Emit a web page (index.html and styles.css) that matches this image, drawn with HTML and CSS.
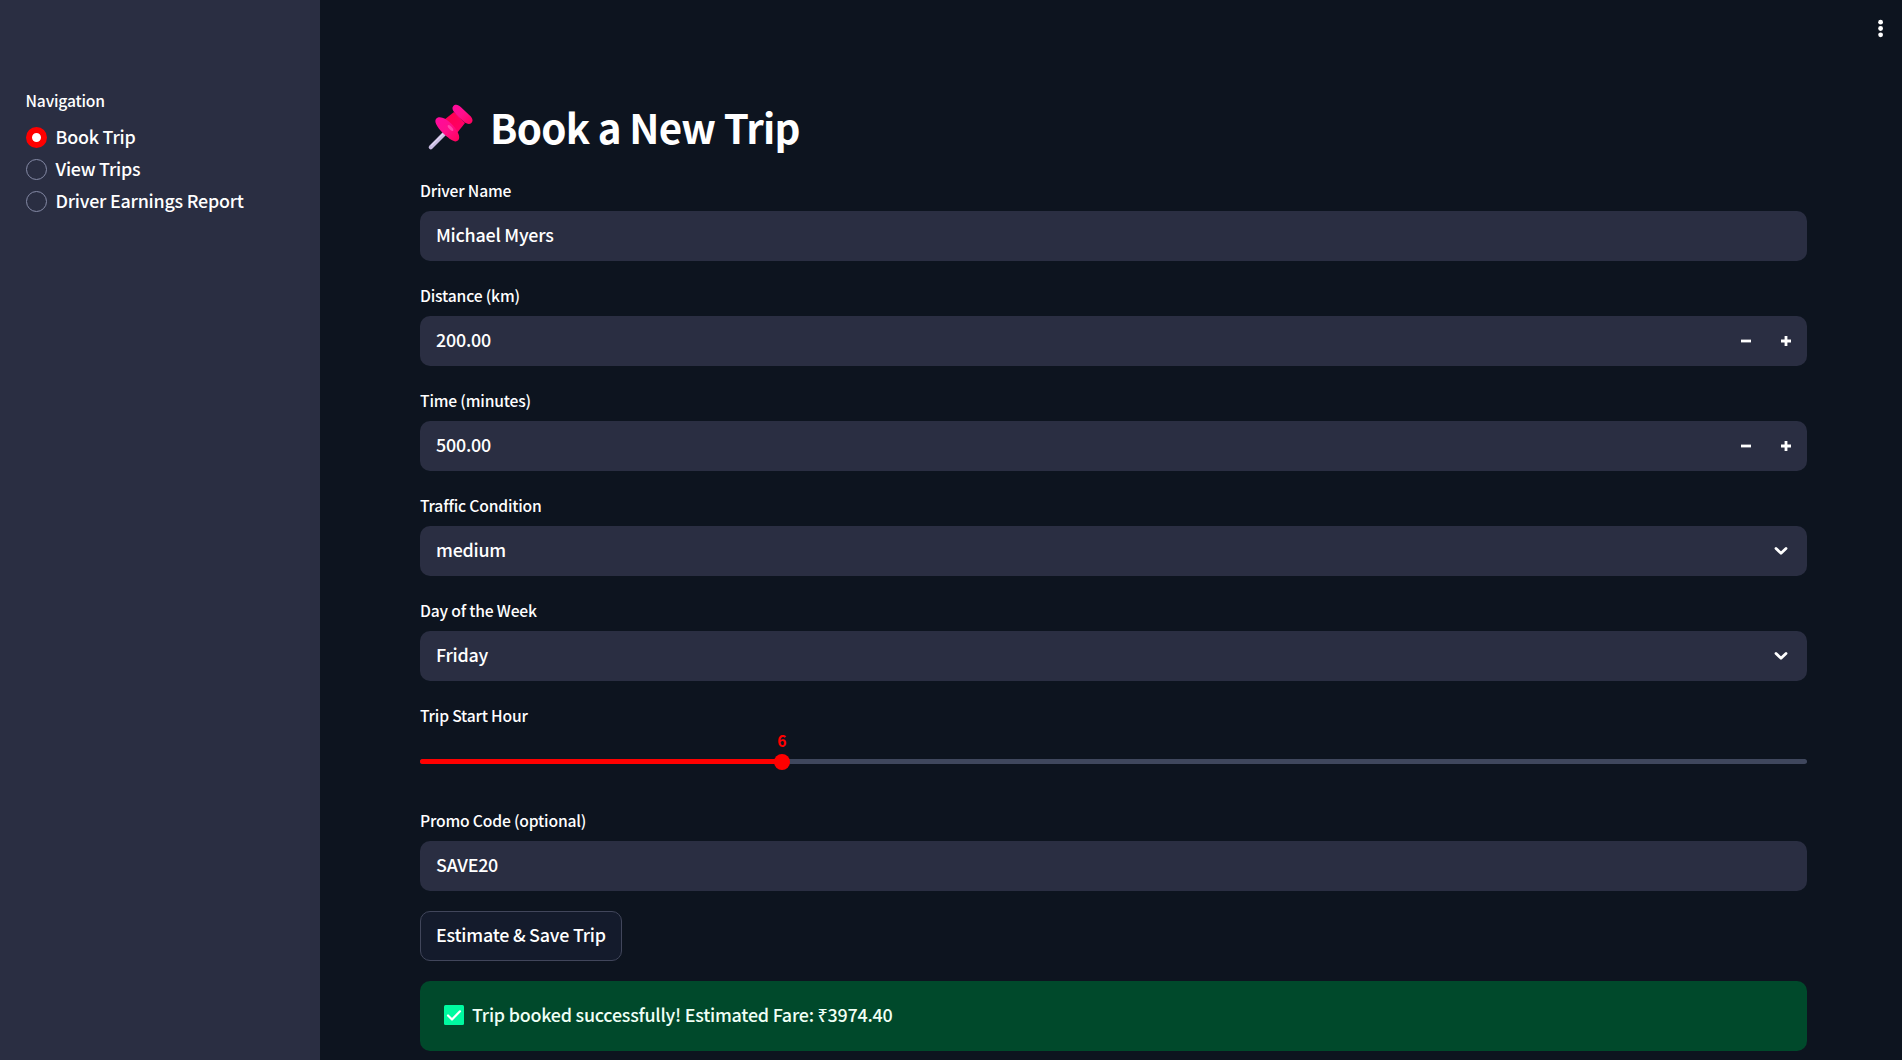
FILE: index.html
```html
<!DOCTYPE html>
<html lang="en">
<head>
<meta charset="utf-8">
<title>Book a New Trip</title>
<link rel="stylesheet" href="styles.css">
</head>
<body>
<div class="app">
  <aside class="sidebar">
    <div class="nav-title">Navigation</div>
    <nav class="nav">
      <label class="option"><span class="radio radio-on"></span><span class="text">Book Trip</span></label>
      <label class="option"><span class="radio"></span><span class="text">View Trips</span></label>
      <label class="option"><span class="radio"></span><span class="text">Driver Earnings Report</span></label>
    </nav>
  </aside>
  <main class="main">
    <header class="toolbar">
      <svg class="menu" width="6" height="20" viewBox="0 0 6 20"><g fill="#fff"><circle cx="2.6" cy="3.2" r="2.4"/><circle cx="2.6" cy="9.5" r="2.4"/><circle cx="2.6" cy="15.8" r="2.4"/></g></svg>
    </header>
    <div class="content">
      <h1 class="title">
        <svg class="pin" width="48" height="48" viewBox="0 0 48 48">
          <defs>
            <linearGradient id="flange" x1="0" y1="0" x2="1" y2="1"><stop offset="0" stop-color="#ff0a9e"/><stop offset=".5" stop-color="#ff0f8c"/><stop offset="1" stop-color="#ff0058"/></linearGradient>
            <linearGradient id="neck" x1="0" y1="0" x2="1" y2="1"><stop offset="0" stop-color="#ff0048"/><stop offset="1" stop-color="#ff0070"/></linearGradient>
          </defs>
          <path d="M3.8 44.2 18 30" stroke="#c9bce2" stroke-width="4.2" stroke-linecap="round"/>
          <path d="M4.6 42.2 17 29.8" stroke="#e3daf4" stroke-width="1.2" stroke-linecap="round"/>
          <path d="M17 17 27 9 38 20 30 30Z" fill="url(#neck)"/>
          <path d="M26.2 3.2C28.3.8 31.5 1.8 34 4.3L42.5 12.3C45 14.5 46.7 17.5 44.6 19.7C42.4 21.9 39.5 20.8 37 18.7C33.5 16 29.7 12.3 27.2 9.2C25.5 7 24.8 4.8 26.2 3.2Z" fill="url(#flange)"/>
          <path d="M9.3 15.5C12.5 12.5 18.5 15 23.8 20.2C30.6 26.8 34.2 34.3 31.2 37.3C28.3 40.2 23.5 36.8 18.3 32.3C12.6 27.2 5.8 19 9.3 15.5Z" fill="url(#flange)"/>
          <ellipse cx="23.5" cy="25" rx="3.8" ry="1.5" transform="rotate(48 23.5 25)" fill="#ff5cb4" opacity=".75"/>
        </svg>
        <span class="heading">Book a New Trip</span>
      </h1>
      <div class="field">
        <div class="label">Driver Name</div>
        <div class="control"><span class="text">Michael Myers</span></div>
      </div>
      <div class="field">
        <div class="label">Distance (km)</div>
        <div class="control"><span class="text">200.00</span>
          <span class="steps"><svg width="12" height="12" viewBox="0 0 12 12"><path d="M1 6h10" stroke="#fff" stroke-width="2.8"/></svg><svg width="12" height="12" viewBox="0 0 12 12"><path d="M1 6h10M6 1v10" stroke="#fff" stroke-width="2.8"/></svg></span>
        </div>
      </div>
      <div class="field">
        <div class="label">Time (minutes)</div>
        <div class="control"><span class="text">500.00</span>
          <span class="steps"><svg width="12" height="12" viewBox="0 0 12 12"><path d="M1 6h10" stroke="#fff" stroke-width="2.8"/></svg><svg width="12" height="12" viewBox="0 0 12 12"><path d="M1 6h10M6 1v10" stroke="#fff" stroke-width="2.8"/></svg></span>
        </div>
      </div>
      <div class="field">
        <div class="label">Traffic Condition</div>
        <div class="control"><span class="text">medium</span>
          <svg class="chevron" width="14" height="10" viewBox="0 0 14 10"><path d="M2 2.5 7 7.2 12 2.5" fill="none" stroke="#fff" stroke-width="2.8" stroke-linecap="round" stroke-linejoin="round"/></svg>
        </div>
      </div>
      <div class="field">
        <div class="label">Day of the Week</div>
        <div class="control"><span class="text">Friday</span>
          <svg class="chevron" width="14" height="10" viewBox="0 0 14 10"><path d="M2 2.5 7 7.2 12 2.5" fill="none" stroke="#fff" stroke-width="2.8" stroke-linecap="round" stroke-linejoin="round"/></svg>
        </div>
      </div>
      <div class="field">
        <div class="label">Trip Start Hour</div>
        <div class="slider">
          <div class="track"><div class="fill" style="width:26.087%"><span class="thumb"></span><span class="value">6</span></div></div>
        </div>
      </div>
      <div class="field">
        <div class="label">Promo Code (optional)</div>
        <div class="control"><span class="text">SAVE20</span></div>
      </div>
      <button class="submit"><span class="text">Estimate &amp; Save Trip</span></button>
      <div class="alert">
        <svg class="check" width="20" height="20" viewBox="0 0 20 20"><rect width="20" height="20" rx="1.5" fill="#00faa0"/><path d="M4 10.5 8 14.5 16 6.3" fill="none" stroke="#fff" stroke-width="2.2" stroke-linecap="round" stroke-linejoin="round"/></svg>
        <span class="text">Trip booked successfully! Estimated Fare: ₹3974.40</span>
      </div>
    </div>
  </main>
</div>
</body>
</html>
```
FILE: styles.css
```css
* {
  box-sizing: border-box;
}

body {
  margin: 0;
  background: #0d141f;
  color: #fff;
  font-family: "Noto Sans CJK SC", "Noto Sans", sans-serif;
  font-size: 17.9px;
  font-weight: 500;
  line-height: 30px;
  letter-spacing: -0.23px;
}

.app {
  display: flex;
  height: 1060px;
  overflow: hidden;
}

.sidebar {
  width: 320px;
  flex: none;
  padding: 86px 25px 0;
  background: #2a2e42;
}

.nav-title,
.label {
  height: 30px;
  font-size: 15.67px;
  letter-spacing: -0.18px;
  margin-bottom: 5px;
}

.nav-title {
  padding-left: 0.5px;
}

.option {
  display: flex;
  align-items: center;
  gap: 9px;
  height: 32px;
  padding-left: 0.5px;
}

.text {
  display: block;
  padding-bottom: 5px;
}

.option .text {
  padding-bottom: 3px;
}

.radio {
  width: 21px;
  height: 21px;
  border: 1px solid #858aa6;
  border-radius: 50%;
}

.radio-on {
  border: 6.5px solid #f00;
  background: #fff;
}

.main {
  flex: 1;
}

.toolbar {
  display: flex;
  justify-content: flex-end;
  height: 75px;
  padding: 19px 19px 0 0;
}

.menu {
  margin-right: -1px;
}

.content {
  display: flex;
  flex-direction: column;
  gap: 20px;
  padding: 0 95px 0 100px;
}

.title {
  display: flex;
  align-items: center;
  gap: 15px;
  height: 61px;
  margin: 20px 0 0;
  padding: 3px 0 0 7px;
  font-size: 40.3px;
  font-weight: 700;
  letter-spacing: -0.73px;
  white-space: nowrap;
}

.control {
  display: flex;
  align-items: center;
  justify-content: space-between;
  height: 50px;
  padding: 0 16px;
  border-radius: 10px;
  background: #2a2e42;
}

.steps {
  display: flex;
  gap: 28px;
  margin-right: -1px;
}

.chevron {
  margin-right: 3px;
}

.slider {
  height: 50px;
  padding-top: 23px;
}

.track {
  height: 5px;
  border-radius: 3px;
  background: #3f475d;
}

.fill {
  position: relative;
  height: 5px;
  border-radius: 3px;
  background: #f00;
}

.thumb {
  position: absolute;
  right: -8px;
  top: -5.5px;
  width: 16px;
  height: 16px;
  border-radius: 50%;
  background: #f00;
}

.value {
  position: absolute;
  right: -10px;
  bottom: 8px;
  width: 20px;
  color: #f00;
  font-size: 15.67px;
  font-weight: 700;
  text-align: center;
}

.submit {
  align-self: flex-start;
  height: 50px;
  padding: 0 15px;
  border: 1px solid #41465b;
  border-radius: 10px;
  background: #141b2c;
  color: inherit;
  font: inherit;
  letter-spacing: inherit;
}

.alert {
  display: flex;
  align-items: center;
  gap: 8px;
  height: 70px;
  padding: 0 24px;
  border-radius: 10px;
  background: #00492b;
  color: #effff5;
}

.check {
  margin-bottom: 2px;
}
```
